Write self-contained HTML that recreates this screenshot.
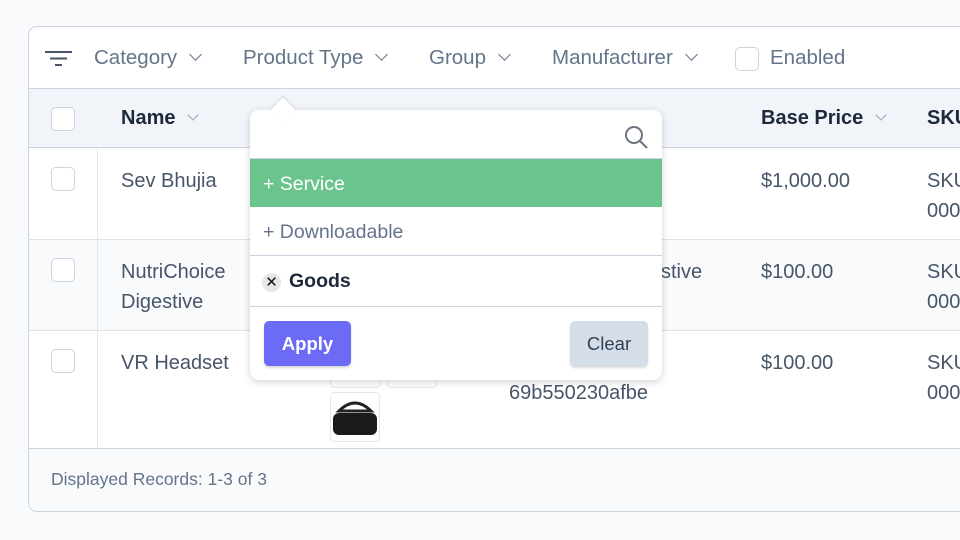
<!DOCTYPE html>
<html><head><style>
*{box-sizing:border-box;margin:0;padding:0}
body{width:960px;height:540px;background:#f8fafc;font-family:"Segoe UI","Liberation Sans",sans-serif;position:relative;overflow:hidden;color:#334155}
.a{position:absolute}
.card{left:28px;top:26px;width:960px;height:486px;background:#fff;border:1px solid #cbd5e1;border-radius:9px;overflow:hidden}
.tl{font-size:20.5px;color:#64748b;top:46px}
.chev{display:inline-block;width:9px;height:9px;border-right:1.5px solid #64748b;border-bottom:1.5px solid #64748b;transform:rotate(45deg);margin-left:14px;position:relative;top:-5px}
.cb{width:24px;height:24px;border:1px solid #cbd5e1;border-radius:5px;background:#fff}
.td{font-size:20px;color:#475569;line-height:30px}
.th{font-size:20px;font-weight:bold;color:#1e293b}
.hl{height:1px;background:#dbe2ea;left:28px;width:932px}
.thumb{width:50px;height:50px;border:1px solid #e2e8f0;border-radius:4px;background:#fff}
</style></head><body>
<div class="a card"></div>
<!-- toolbar -->
<svg class="a" style="left:45px;top:50px" width="28" height="18"><path d="M0 2H27M5 8.5H22M10 15H17" stroke="#475569" stroke-width="2"/></svg>
<div class="a tl" style="left:94px">Category<span class="chev"></span></div>
<div class="a tl" style="left:243px">Product Type<span class="chev"></span></div>
<div class="a tl" style="left:429px">Group<span class="chev"></span></div>
<div class="a tl" style="left:552px">Manufacturer<span class="chev"></span></div>
<div class="a cb" style="left:735px;top:47px"></div>
<div class="a tl" style="left:770px">Enabled</div>
<!-- header -->
<div class="a" style="left:29px;top:88px;width:931px;height:60px;background:#f1f5f9;border-top:1px solid #cbd5e1;border-bottom:1px solid #cbd5e1"></div>
<div class="a cb" style="left:51px;top:107px"></div>
<div class="a th" style="left:121px;top:107px">Name<span class="chev" style="border-color:#94a3b8;width:8px;height:8px"></span></div>
<div class="a th" style="left:761px;top:107px">Base Price<span class="chev" style="border-color:#94a3b8;width:8px;height:8px"></span></div>
<div class="a th" style="left:927px;top:107px">SKU</div>
<!-- rows -->
<div class="a" style="left:29px;top:240px;width:931px;height:90px;background:#f8fafc"></div>
<div class="a hl" style="top:239px"></div>
<div class="a hl" style="top:330px"></div>
<div class="a" style="left:29px;top:448px;width:931px;height:63px;background:#f8fafc;border-top:1px solid #cbd5e1;border-bottom-left-radius:8px"></div>
<div class="a" style="left:97px;top:148px;width:1px;height:300px;background:#e2e8f0"></div>
<div class="a cb" style="left:51px;top:167px"></div>
<div class="a cb" style="left:51px;top:258px"></div>
<div class="a cb" style="left:51px;top:349px"></div>
<div class="a td" style="left:121px;top:166px">Sev Bhujia</div>
<div class="a td" style="left:121px;top:257px">NutriChoice<br>Digestive</div>
<div class="a td" style="left:121px;top:348px">VR Headset</div>
<div class="a td" style="left:661px;top:257px">stive</div>
<div class="a td" style="left:509px;top:378px">69b550230afbe</div>
<div class="a td" style="left:761px;top:166px">$1,000.00</div>
<div class="a td" style="left:761px;top:257px">$100.00</div>
<div class="a td" style="left:761px;top:348px">$100.00</div>
<div class="a td" style="left:927px;top:166px">SKU<br>000</div>
<div class="a td" style="left:927px;top:257px">SKU<br>000</div>
<div class="a td" style="left:927px;top:348px">SKU<br>000</div>
<div class="a thumb" style="left:330px;top:338px"></div>
<div class="a thumb" style="left:387px;top:338px"></div>
<div class="a thumb" style="left:330px;top:392px"><svg width="48" height="48"><path d="M8 18Q24 2 40 18Z" fill="none" stroke="#222" stroke-width="3"/><rect x="2" y="20" width="44" height="22" rx="6" fill="#1a1a1a"/></svg></div>
<div class="a" style="left:51px;top:469px;font-size:17.5px;color:#64748b">Displayed Records: 1-3 of 3</div>
<!-- popup -->
<div class="a" style="left:250px;top:110px;width:412px;height:270px;background:#fff;border-radius:9px;box-shadow:0 2px 8px rgba(0,0,0,.18);overflow:hidden">
 <svg class="a" style="left:374px;top:15px" width="26" height="26"><circle cx="10" cy="10" r="8" fill="none" stroke="#6b7280" stroke-width="2"/><path d="M16 16L23 23" stroke="#6b7280" stroke-width="2"/></svg>
 <div class="a" style="left:0;top:48px;width:412px;height:1px;background:#cbd5e1"></div>
 <div class="a" style="left:0;top:49px;width:412px;height:48px;background:#6bc48d;color:#fff;font-size:19.5px;line-height:50px;padding-left:13px">+ Service</div>
 <div class="a" style="left:0;top:97px;width:412px;height:49px;color:#64748b;font-size:19.5px;line-height:50px;padding-left:13px;border-bottom:1px solid #cbd5e1">+ Downloadable</div>
 <div class="a" style="left:12px;top:163px;width:19px;height:19px;border-radius:50%;background:#e5e7eb;color:#111;font-size:15px;line-height:19px;text-align:center">✕</div>
 <div class="a" style="left:39px;top:160px;font-size:19.5px;font-weight:bold;color:#1e293b">Goods</div>
 <div class="a" style="left:0;top:196px;width:412px;height:1px;background:#cbd5e1"></div>
 <div class="a" style="left:14px;top:211px;width:87px;height:45px;background:#6b6bf5;border-radius:5px;color:#fff;font-weight:bold;font-size:18.5px;line-height:45px;text-align:center;box-shadow:0 2px 2px rgba(0,0,0,.15)">Apply</div>
 <div class="a" style="left:320px;top:211px;width:78px;height:45px;background:#d5dee8;border-radius:5px;color:#334155;font-size:18.5px;line-height:45px;text-align:center;box-shadow:0 2px 2px rgba(0,0,0,.15)">Clear</div>
</div>
<div class="a" style="left:274px;top:101px;width:18px;height:18px;background:#fff;transform:rotate(45deg);box-shadow:-1px -1px 2px rgba(0,0,0,.12)"></div>
</body></html>
